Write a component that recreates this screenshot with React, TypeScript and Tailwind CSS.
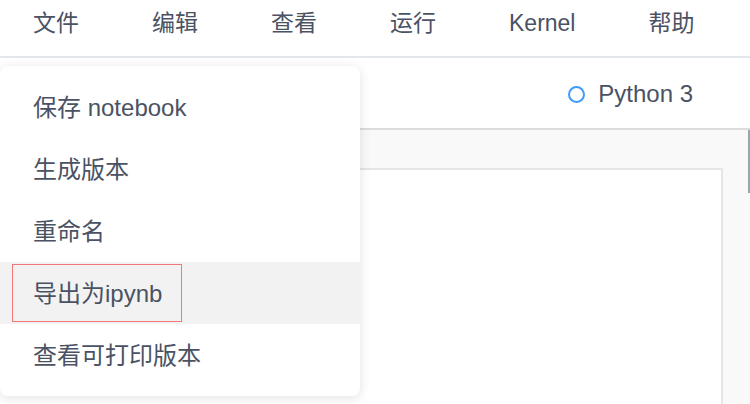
import React from 'react';

const menuBar = ['文件', '编辑', '查看', '运行', 'Kernel', '帮助'];

const fileMenu = ['保存 notebook', '生成版本', '重命名', '导出为ipynb', '查看可打印版本'];

export default function App() {
    const active = 3;

    return (
        <div
            className="relative w-[750px] h-[404px] overflow-hidden bg-white flex flex-col text-[#4a5263]"
            style={{ fontFamily: '"Liberation Sans", "Noto Sans CJK SC", sans-serif' }}
        >
            {/* Menu bar */}
            <div className="h-[58px] shrink-0 border-b-2 border-[#e3e7eb] flex items-center gap-[73px] px-[33px] text-[23px] leading-none pb-[9px]">
                {menuBar.map((label) => (
                    <span key={label}>{label}</span>
                ))}
            </div>

            {/* Toolbar with kernel status */}
            <div className="h-[72px] shrink-0 border-b-2 border-[#dcdcdc] flex items-center justify-end pr-[57px] gap-[13px] text-[24px] leading-none pt-[2px]">
                <span className="w-[17px] h-[17px] rounded-full border-2 border-[#3d9bfa]" />
                <span>Python 3</span>
            </div>

            {/* Notebook area */}
            <div className="flex-1 flex bg-[#f9f9f9]">
                <div className="flex-1 pt-[38px] pr-[25px]">
                    <div className="h-full bg-white border-2 border-l-0 border-b-0 border-[#e6e6e6]" />
                </div>
                <div className="w-[2px]">
                    <div className="h-[63px] bg-[#9aa5b4]" />
                </div>
            </div>

            {/* File dropdown */}
            <div className="absolute left-0 top-[66px] w-[360px] bg-white rounded-lg py-[10px] shadow-[0_2px_12px_rgba(0,0,0,0.12)]">
                {fileMenu.map((item, i) => (
                    <div
                        key={item}
                        className={`h-[62px] flex items-center px-[12px] text-[24px] leading-none ${i === active ? 'bg-[#f2f2f2]' : ''}`}
                    >
                        <span
                            className={`h-[58px] flex items-center pl-[20px] pt-[1px] ${i === active ? 'w-[170px] border border-[#f07878]' : 'border border-transparent'}`}
                        >
                            {item}
                        </span>
                    </div>
                ))}
            </div>
        </div>
    );
}
